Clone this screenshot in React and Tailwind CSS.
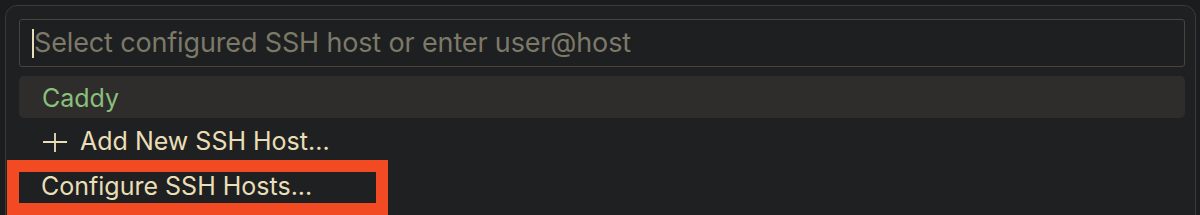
import React from 'react';

const font = { fontFamily: 'Inter, "Noto Sans", sans-serif' };

function PlusIcon() {
  return (
    <svg width="26" height="20" viewBox="0 0 26 20" className="shrink-0">
      <path d="M1 10H25M13 1V20" stroke="#e9deb5" strokeWidth="1.8" fill="none" />
    </svg>
  );
}

export default function App() {
  return (
    <div
      className="relative w-[1200px] h-[215px] overflow-hidden bg-[#1b1c1e] pt-[5px] pl-[5px] pr-[4px]"
      style={font}
    >
      <div className="h-[230px] rounded-t-[12px] border border-[#3a3a3b] bg-[#1f2022] pl-[13px] pr-[10px] pt-[13px]">
        {/* input */}
        <div className="flex h-[48px] items-center rounded-[3px] border border-[#48453f] bg-[#1e1f21] pl-[12px]">
          <span className="h-[29px] w-[2px] bg-[#e9deb5]" />
          <span className="text-[27px] tracking-[-0.15px] text-[#7c7968]">
            Select configured SSH host or enter user@host
          </span>
        </div>

        {/* list */}
        <div className="mt-[9px] flex flex-col">
          <div className="flex h-[42px] items-center rounded-[5px] bg-[#2e2d2b] pl-[23px] pt-[4px] text-[25px] text-[#89c07c]">
            Caddy
          </div>
          <div className="flex h-[42px] items-center gap-[12px] pl-[23px] pt-[5px] text-[25px] text-[#e9deb5]">
            <PlusIcon />
            <span>Add New SSH Host...</span>
          </div>
          <div className="flex h-[52px] items-center pl-[22px] pt-[2px] text-[25px] text-[#e9deb5]">
            Configure SSH Hosts...
          </div>
        </div>
      </div>

      {/* annotation box */}
      <div className="absolute left-[7px] top-[160px] h-[55px] w-[381px] border-[12px] border-[#f24a23]" />
    </div>
  );
}
